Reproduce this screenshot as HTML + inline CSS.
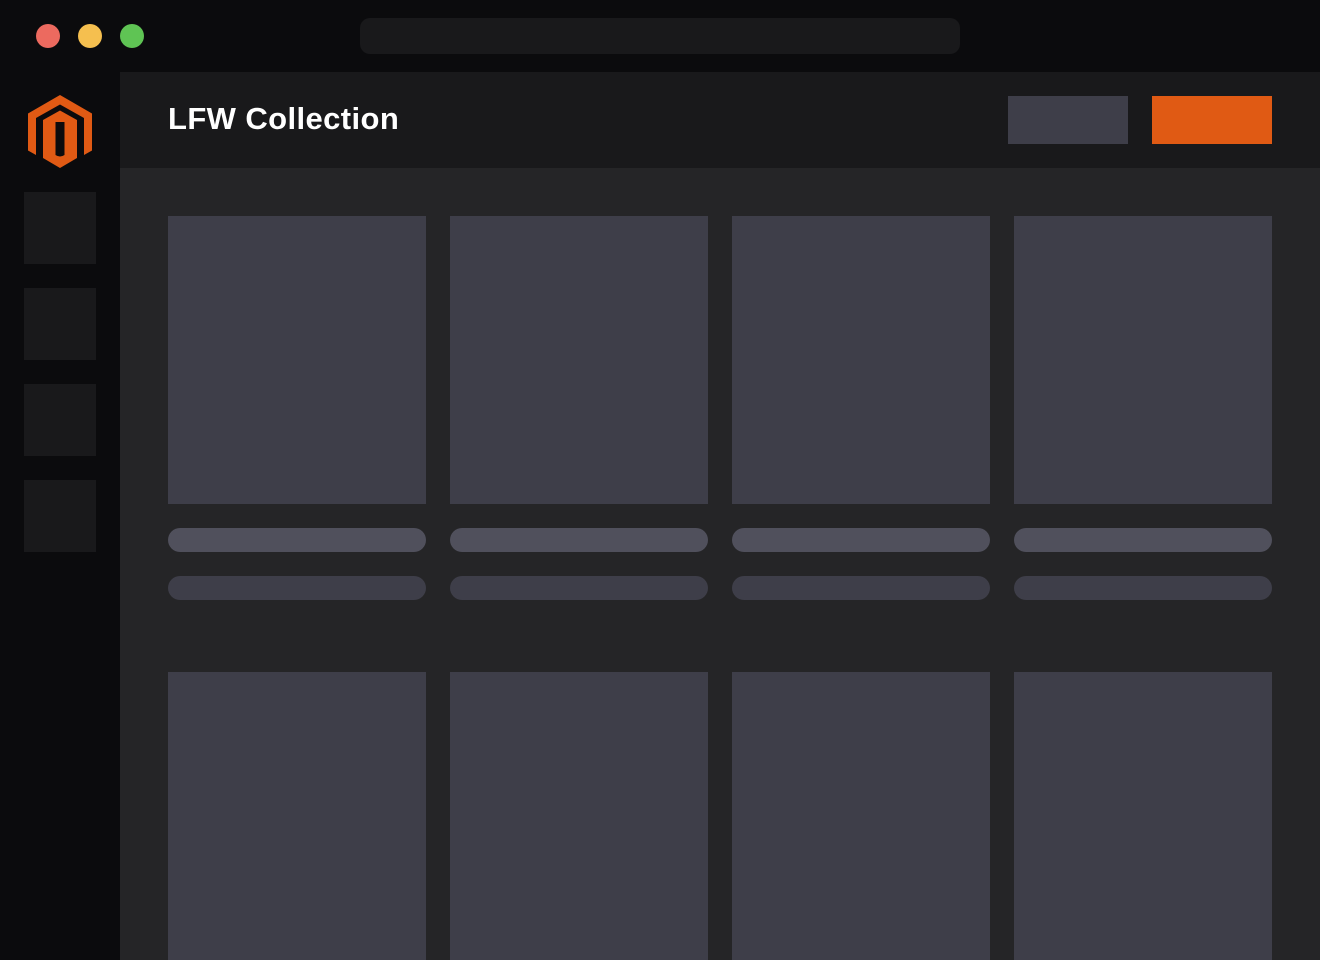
<!DOCTYPE html>
<html><head><meta charset="utf-8"><style>
*{margin:0;padding:0;box-sizing:border-box}
html,body{width:1320px;height:960px;overflow:hidden;background:#0b0b0d;font-family:"Liberation Sans",sans-serif}
.a{position:absolute}
.dot{width:24px;height:24px;border-radius:50%;top:24px}
.card{background:#3e3e49;width:258px}
.b1{background:#50505c;width:258px;height:24px;border-radius:12px}
.b2{background:#3e3e49;width:258px;height:24px;border-radius:12px}
.side{left:24px;width:72px;height:72px;background:#19191b}
</style></head><body>
<div class="a dot" style="left:36px;background:#ec6a5f"></div>
<div class="a dot" style="left:78px;background:#f5bf4f"></div>
<div class="a dot" style="left:120px;background:#5fc454"></div>
<div class="a" style="left:360px;top:18px;width:600px;height:36px;border-radius:10px;background:#19191b"></div>

<svg class="a" style="left:20px;top:90px" width="80" height="84" viewBox="20 90 80 84">
<path fill="#e05a14" d="M60 95 L92 113.5 L92 150.5 L84 155 L84 118 L60 104.5 L36 118 L36 155 L28 150.5 L28 113.5 Z"/>
<path fill="#e05a14" fill-rule="evenodd" d="M60 110.5 L77 120 L77 158 L60 168 L43 158 L43 120 Z M55.5 122 L64.5 122 L64.5 155 Q60 158 55.5 155 Z"/>
</svg>
<div class="a side" style="top:192px"></div>
<div class="a side" style="top:288px"></div>
<div class="a side" style="top:384px"></div>
<div class="a side" style="top:480px"></div>

<div class="a" style="left:120px;top:72px;width:1200px;height:96px;background:#19191b"></div>
<div class="a" style="left:168px;top:101px;font-size:31px;font-weight:bold;color:#fff;letter-spacing:0.4px">LFW Collection</div>
<div class="a" style="left:1008px;top:96px;width:120px;height:48px;background:#3e3e49"></div>
<div class="a" style="left:1152px;top:96px;width:120px;height:48px;background:#e05a14"></div>

<div class="a" style="left:120px;top:168px;width:1200px;height:792px;background:#252527"></div>

<div class="a card" style="left:168px;top:216px;height:288px"></div>
<div class="a card" style="left:450px;top:216px;height:288px"></div>
<div class="a card" style="left:732px;top:216px;height:288px"></div>
<div class="a card" style="left:1014px;top:216px;height:288px"></div>
<div class="a b1" style="left:168px;top:528px"></div>
<div class="a b1" style="left:450px;top:528px"></div>
<div class="a b1" style="left:732px;top:528px"></div>
<div class="a b1" style="left:1014px;top:528px"></div>
<div class="a b2" style="left:168px;top:576px"></div>
<div class="a b2" style="left:450px;top:576px"></div>
<div class="a b2" style="left:732px;top:576px"></div>
<div class="a b2" style="left:1014px;top:576px"></div>
<div class="a card" style="left:168px;top:672px;height:288px"></div>
<div class="a card" style="left:450px;top:672px;height:288px"></div>
<div class="a card" style="left:732px;top:672px;height:288px"></div>
<div class="a card" style="left:1014px;top:672px;height:288px"></div>
</body></html>
